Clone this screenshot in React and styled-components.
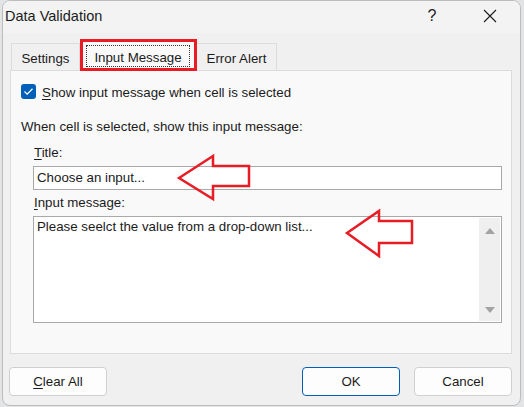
import styled, { createGlobalStyle } from "styled-components";

const GlobalStyle = createGlobalStyle`
  body {
    margin: 0;
    background: #e2e4e6;
    font-family: "Liberation Sans", Arial, sans-serif;
    color: #1b1b1b;
  }
`;

const Page = styled.div`
  position: relative;
  width: 524px;
  height: 407px;
  overflow: hidden;
`;

const Window = styled.div`
  width: 519px;
  height: 406px;
  margin-left: 2px;
  box-sizing: border-box;
  background: #f0f0f0;
  border: 1px solid #bdbdbd;
  border-radius: 8px;
  display: flex;
  flex-direction: column;
  overflow: hidden;
`;

const TitleBar = styled.div`
  height: 32px;
  display: flex;
  align-items: center;
  padding: 0 7px 2px 2px;
  box-sizing: border-box;
  background: #f3f3f3;
`;

const Title = styled.span`
  font-size: 14.5px;
  flex: 1;
`;

const CaptionButton = styled.span`
  width: 46px;
  height: 30px;
  display: flex;
  align-items: center;
  justify-content: center;
  font-size: 16px;
  color: #222;
  margin-left: ${(p) => p.gap || 0}px;
`;

const Content = styled.div`
  flex: 1;
  display: flex;
  flex-direction: column;
  padding: 0 8px 0 7px;
`;

const TabRow = styled.div`
  display: flex;
  align-items: flex-end;
  margin: 10px 0 0 1px;
  height: 27px;
`;

const Tab = styled.div`
  height: ${(p) => (p.active ? 30 : 27)}px;
  width: ${(p) => p.w}px;
  box-sizing: border-box;
  border: 1px solid ${(p) => (p.active ? "#d4d4d4" : "#dcdcdc")};
  border-bottom: none;
  background: ${(p) => (p.active ? "#f9f9f9" : "#f0f0f0")};
  display: flex;
  justify-content: center;
  align-items: ${(p) => (p.active ? "flex-start" : "center")};
  padding-top: 3px;
  margin-bottom: ${(p) => (p.active ? -1 : 0)}px;
  position: relative;
  z-index: ${(p) => (p.active ? 2 : 1)};
  font-size: 13.3px;
  line-height: 16px;
`;

const FocusLabel = styled.span`
  border: 1px dotted #333;
  padding: 4px 7px 0;
  line-height: 16px;
`;

const Panel = styled.div`
  height: 284px;
  box-sizing: border-box;
  background: #f9f9f9;
  border: 1px solid #dcdcdc;
  display: flex;
  flex-direction: column;
  font-size: 13.3px;
  line-height: 16px;
`;

const CheckRow = styled.label`
  display: flex;
  align-items: flex-start;
  gap: 6px;
  margin: 14px 0 0 10px;
`;

const Checkbox = styled.span`
  width: 15px;
  height: 15px;
  margin-top: -1px;
  border-radius: 3px;
  background: #005fb8;
  display: flex;
  align-items: center;
  justify-content: center;
`;

const Line = styled.div`
  margin: ${(p) => p.top}px 0 0 ${(p) => p.left}px;
`;

const Key = styled.span`
  text-decoration: underline;
  text-underline-offset: 2px;
`;

const Field = styled.div`
  margin: 5px 0 0 22px;
  width: 469px;
  height: ${(p) => p.h}px;
  box-sizing: border-box;
  background: #fff;
  border: 1px solid #a9a9a9;
  display: flex;
  align-items: ${(p) => (p.multi ? "stretch" : "center")};
`;

const FieldText = styled.div`
  flex: 1;
  padding: ${(p) => (p.multi ? "2px 3px" : "0 3px")};
`;

const ScrollTrack = styled.div`
  width: 21px;
  margin: 1px;
  background: #efefef;
  display: flex;
  flex-direction: column;
  justify-content: space-between;
  align-items: center;
  padding: 10px 0 8px;
  box-sizing: border-box;
`;

const Tri = styled.span`
  width: 0;
  height: 0;
  border-left: 5px solid transparent;
  border-right: 5px solid transparent;
  ${(p) =>
    p.down
      ? "border-top: 6px solid #a3a3a3;"
      : "border-bottom: 6px solid #a3a3a3;"}
`;

const Footer = styled.div`
  display: flex;
  margin: 13px 0 0 -1px;
`;

const Button = styled.button`
  width: 98px;
  height: 29px;
  box-sizing: border-box;
  background: #fdfdfd;
  border: 1px solid ${(p) => (p.primary ? "#005fb8" : "#d0d0d0")};
  border-radius: 4px;
  font-family: "Liberation Sans", Arial, sans-serif;
  font-size: 13.3px;
  color: #1b1b1b;
  margin-left: ${(p) => p.ml || 0}px;
  padding: 0;
`;

const RedBox = styled.div`
  position: absolute;
  z-index: 5;
  left: 80px;
  top: 39px;
  width: 117px;
  height: 32px;
  box-sizing: border-box;
  border: 3px solid #e81c24;
  pointer-events: none;
`;

const Overlay = styled.svg`
  position: absolute;
  z-index: 5;
  left: 0;
  top: 0;
  pointer-events: none;
`;

export default function App() {
  return (
    <>
      <GlobalStyle />
      <Page>
        <Window>
          <TitleBar>
            <Title>Data Validation</Title>
            <CaptionButton>?</CaptionButton>
            <CaptionButton gap={12}>
              <svg width="14" height="14" viewBox="0 0 14 14">
                <path d="M1 1 L13 13 M13 1 L1 13" stroke="#1b1b1b" strokeWidth="1.1" />
              </svg>
            </CaptionButton>
          </TitleBar>
          <Content>
            <TabRow>
              <Tab w={69}>Settings</Tab>
              <Tab w={116} active>
                <FocusLabel>Input Message</FocusLabel>
              </Tab>
              <Tab w={81}>Error Alert</Tab>
            </TabRow>
            <Panel>
              <CheckRow>
                <Checkbox>
                  <svg width="11" height="9" viewBox="0 0 11 9">
                    <path d="M1.5 4.5 L4.2 7.2 L9.5 1.8" fill="none" stroke="#fff" strokeWidth="1.3" />
                  </svg>
                </Checkbox>
                <span>
                  <Key>S</Key>how input message when cell is selected
                </span>
              </CheckRow>
              <Line top={18} left={10}>When cell is selected, show this input message:</Line>
              <Line top={10} left={23}>
                <Key>T</Key>itle:
              </Line>
              <Field h={24}>
                <FieldText>Choose an input...</FieldText>
              </Field>
              <Line top={5} left={23}>
                <Key>I</Key>nput message:
              </Line>
              <Field h={107} multi>
                <FieldText multi>Please seelct the value from a drop-down list...</FieldText>
                <ScrollTrack>
                  <Tri />
                  <Tri down />
                </ScrollTrack>
              </Field>
            </Panel>
            <Footer>
              <Button>
                <Key>C</Key>lear All
              </Button>
              <Button primary ml={195}>OK</Button>
              <Button ml={14}>Cancel</Button>
            </Footer>
          </Content>
        </Window>
        <RedBox />
        <Overlay width="524" height="407">
          <polygon
            points="179,178 213,156 213,166 249,166 249,186 213,186 213,199"
            fill="none"
            stroke="#e81c24"
            strokeWidth="2.5"
          />
          <polygon
            points="347,233 379,211 379,221 412,221 412,243 379,243 379,256"
            fill="none"
            stroke="#e81c24"
            strokeWidth="2.5"
          />
        </Overlay>
      </Page>
    </>
  );
}
